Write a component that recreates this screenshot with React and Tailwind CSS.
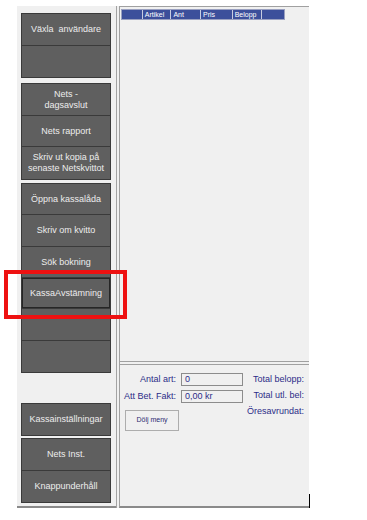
import React from 'react';

/* ---------------- MENU BUTTON ---------------- */
const MenuBtn = ({ children, h = 'h-[31px]', focus = false, last = false }) => (
  <div
    className={`${h} flex items-center justify-center text-center bg-[#5f5f5f] text-[#ededed] text-[9px] leading-[11px] ${
      last ? '' : 'border-b border-[#3a3a3a]'
    }`}
  >
    {focus ? (
      <div className="w-[88px] h-full flex items-center justify-center border border-[#262626]">
        {children}
      </div>
    ) : (
      children
    )}
  </div>
);

const Group = ({ children, className = '' }) => (
  <div className={`w-[90px] border border-[#3a3a3a] flex flex-col ${className}`}>{children}</div>
);

/* ---------------- FORM FIELD ---------------- */
const Field = ({ label, value }) => (
  <div className="flex items-center h-[13px]">
    <span className="w-[56px] text-right whitespace-nowrap">{label}</span>
    <div className="ml-[5px] w-[62px] h-[13px] border border-[#8c8c8c] bg-[#f0f0f0] pl-[3px] flex items-center leading-none">
      {value}
    </div>
  </div>
);

const cols = [
  { w: 'w-[20px]', t: '' },
  { w: 'w-[29px]', t: 'Artikel' },
  { w: 'w-[30px]', t: 'Ant' },
  { w: 'w-[32px]', t: 'Pris' },
  { w: 'w-[30px]', t: 'Belopp' },
  { w: 'w-[23px]', t: '' },
];

const App = () => {
  return (
    <div className="relative w-[367px] h-[520px] bg-white font-['Liberation_Sans',Arial,sans-serif] overflow-hidden">
      <div className="flex pt-[6px] pl-[17px]">

        {/* Left menu */}
        <div className="w-[99px] h-[502px] bg-[#f0f0f0] border-b-2 border-[#8a8a8a] pl-[4px] pt-[7px] flex flex-col">
          <Group>
            <MenuBtn h="h-[32px]">Växla&nbsp; användare</MenuBtn>
            <MenuBtn h="h-[31px]" last />
          </Group>

          <Group className="mt-[5px]">
            <MenuBtn h="h-[32px]">Nets -<br />dagsavslut</MenuBtn>
            <MenuBtn h="h-[31px]">Nets rapport</MenuBtn>
            <MenuBtn h="h-[32px]" last>Skriv ut kopia på<br />senaste Netskvittot</MenuBtn>
          </Group>

          <Group className="mt-[3px]">
            <MenuBtn h="h-[31px]">Öppna kassalåda</MenuBtn>
            <MenuBtn h="h-[32px]">Skriv om kvitto</MenuBtn>
            <MenuBtn h="h-[31px]">Sök bokning</MenuBtn>
            <MenuBtn h="h-[31px]" focus>KassaAvstämning</MenuBtn>
            <MenuBtn h="h-[32px]" />
            <MenuBtn h="h-[31px]" last />
          </Group>

          <Group className="mt-[30px]">
            <MenuBtn h="h-[31px]" last>Kassainställningar</MenuBtn>
          </Group>

          <Group className="mt-[2px]">
            <MenuBtn h="h-[32px]">Nets Inst.</MenuBtn>
            <MenuBtn h="h-[31px]" last>Knappunderhåll</MenuBtn>
          </Group>
        </div>

        {/* Splitter */}
        <div className="w-[3px] h-[502px] bg-[#f0f0f0] border-l border-[#a3a3a3]" />

        {/* Right panel */}
        <div className="w-[190px] h-[502px] flex flex-col bg-[#f0f0f0] border-l border-t border-[#a0a0a0] border-b-2 border-b-[#8a8a8a]">
          {/* Receipt grid */}
          <div className="h-[355px] border-b border-[#a0a0a0] pt-[2px] pl-[1px]">
            <div className="flex h-[11px] bg-[#3c4f9b] border border-[#9aa0c0] w-[164px]">
              {cols.map((c, i) => (
                <div
                  key={i}
                  className={`${c.w} h-full text-[7px] leading-[10px] text-white pl-[2px] ${
                    i > 0 ? 'border-l border-[#c8cce0]' : ''
                  }`}
                >
                  {c.t}
                </div>
              ))}
            </div>
          </div>

          {/* Totals */}
          <div className="mt-[2px] flex-1 border-t border-[#a0a0a0] pt-[8px] flex text-[9px] text-[#2c2c88]">
            <div className="flex flex-col">
              <Field label="Antal art:" value="0" />
              <div className="h-[4px]" />
              <Field label="Att Bet. Fakt:" value="0,00 kr" />
              <button className="mt-[7px] ml-[5px] w-[54px] h-[21px] border border-[#adadad] bg-[#f0f0f0] text-[7px] text-[#2c2c70]">
                Dölj meny
              </button>
            </div>
            <div className="ml-[5px] w-[56px] flex flex-col -mt-[1px]">
              <div className="h-[16px] flex items-center justify-end whitespace-nowrap">Total belopp:</div>
              <div className="h-[16px] flex items-center justify-end whitespace-nowrap">Total utl. bel:</div>
              <div className="h-[16px] flex items-center justify-end whitespace-nowrap">Öresavrundat:</div>
            </div>
          </div>
        </div>

        {/* caret mark */}
        <div className="self-end w-px h-[14px] bg-black" />
      </div>

      {/* Red highlight annotation */}
      <div className="absolute left-[4px] top-[270px] w-[123px] h-[49px] border-4 border-[#ee1111]" />
    </div>
  );
};

export default App;
